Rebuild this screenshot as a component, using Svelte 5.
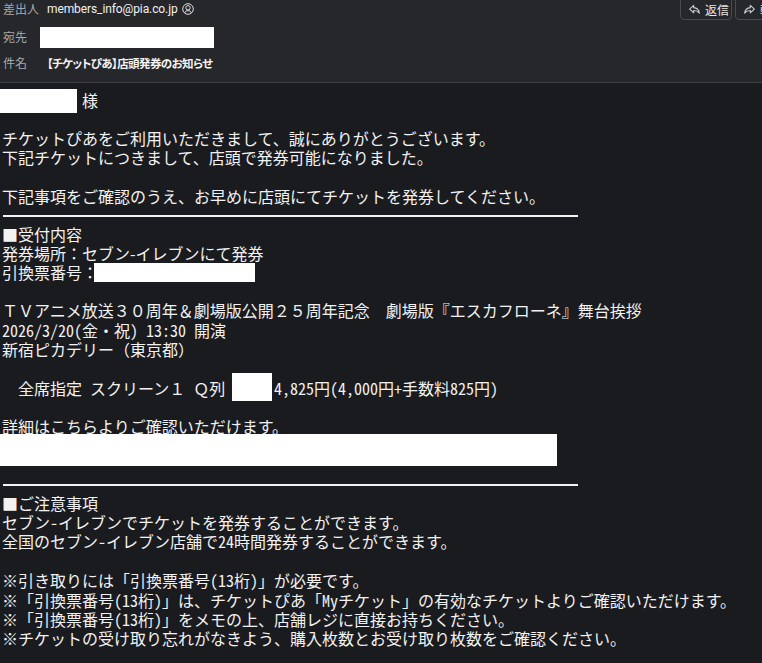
<script>
  const noticeLines = [
    "※引き取りには「引換票番号(13桁)」が必要です。",
    "※「引換票番号(13桁)」は、チケットぴあ「Myチケット」の有効なチケットよりご確認いただけます。",
    "※「引換票番号(13桁)」をメモの上、店舗レジに直接お持ちください。",
    "※チケットの受け取り忘れがなきよう、購入枚数とお受け取り枚数をご確認ください。",
  ];
</script>

<div class="mail">
  <header class="head">
    <div class="actions">
      <button class="action">
        <svg viewBox="0 0 16 16" width="13" height="13"><path d="M7 3 2 7.5 7 12V9.2c3 0 5 .8 7 3.3-.5-4-3-6.5-7-6.8z" fill="none" stroke="#c8c8c8" stroke-width="1.4" stroke-linejoin="round"/></svg>
        <span>返信</span>
      </button>
      <button class="action">
        <svg viewBox="0 0 16 16" width="13" height="13"><path d="M9 3l5 4.5L9 12V9.2c-3 0-5 .8-7 3.3.5-4 3-6.5 7-6.8z" fill="none" stroke="#c8c8c8" stroke-width="1.4" stroke-linejoin="round"/></svg>
        <span>転送</span>
      </button>
    </div>
    <div class="row from">
      <span class="label">差出人</span>
      <span class="value">members_info@pia.co.jp</span>
      <svg class="avatar" viewBox="0 0 12 12" width="12" height="12"><circle cx="6" cy="6" r="5.3" fill="none" stroke="#ddd" stroke-width="1"/><circle cx="6" cy="4.8" r="2.2" fill="none" stroke="#ddd" stroke-width="1"/><path d="M2.6 10c.6-1.8 2-2.4 3.4-2.4s2.8.6 3.4 2.4" fill="none" stroke="#ddd" stroke-width="1"/></svg>
    </div>
    <div class="row to">
      <span class="label">宛先</span>
      <span class="mask mask-to"></span>
    </div>
    <div class="row subject">
      <span class="label">件名</span>
      <strong>【チケットぴあ】店頭発券のお知らせ</strong>
    </div>
  </header>

  <main class="body">
    <div class="greeting"><span class="mask mask-name"></span><span>様</span></div>
    <p class="first">チケットぴあをご利用いただきまして、誠にありがとうございます。</p>
    <p>下記チケットにつきまして、店頭で発券可能になりました。</p>
    <p class="blank"></p>
    <p>下記事項をご確認のうえ、お早めに店頭にてチケットを発券してください。</p>
    <hr />
    <p>■受付内容</p>
    <p class="wide">発券場所&#xFF1A;セブン-イレブンにて発券</p>
    <p class="wide">引換票番号&#xFF1A;<span class="mask mask-code"></span></p>
    <p class="blank short"></p>
    <p class="wide">&#xFF34;&#xFF36;アニメ放送&#xFF13;&#xFF10;周年&#xFF06;劇場版公開&#xFF12;&#xFF15;周年記念&#x3000;劇場版『エスカフローネ』舞台挨拶</p>
    <p>2026/3/20(金・祝) 13:30 開演</p>
    <p class="wide">新宿ピカデリー&#xFF08;東京都&#xFF09;</p>
    <p class="blank"></p>
    <p class="seat"><span class="seat-text wide">全席指定 スクリーン&#xFF11; &#xFF31;列</span><span class="mask mask-seat"></span><span>4,825円(4,000円+手数料825円)</span></p>
    <p class="detail">詳細はこちらよりご確認いただけます。</p>
    <div class="mask mask-link"></div>
    <hr class="second" />
    <p>■ご注意事項</p>
    <p>セブン-イレブンでチケットを発券することができます。</p>
    <p>全国のセブン-イレブン店舗で24時間発券することができます。</p>
    <p class="blank"></p>
    {#each noticeLines as line}
      <p>{line}</p>
    {/each}
  </main>
</div>

<style>
  :global(body) {
    background: #1a1b1f;
  }

  .mail {
    width: 762px;
    height: 663px;
    overflow: hidden;
    background: #1a1b1f;
    color: #f2f2f2;
    font-family: "Noto Sans CJK JP", sans-serif;
  }

  .head {
    position: relative;
    box-sizing: border-box;
    height: 83px;
    background: #26272b;
    border-bottom: 1px solid #3c3d41;
    font-size: 12px;
    overflow: hidden;
  }

  .actions {
    position: absolute;
    top: -9px;
    left: 680px;
    display: flex;
    gap: 3px;
  }

  .action {
    display: flex;
    align-items: center;
    gap: 4px;
    height: 29px;
    width: 52px;
    padding: 7px 0 0 7px;
    background: transparent;
    border: 1px solid #4a4b4f;
    border-radius: 4px;
    color: #e8e8e8;
    font: 12px "Noto Sans CJK JP", sans-serif;
    white-space: nowrap;
    overflow: hidden;
  }

  .row {
    display: flex;
    align-items: center;
    color: #f0f0f0;
  }

  .from {
    height: 18px;
  }

  .value {
    font-family: Roboto, sans-serif;
    font-size: 12px;
    letter-spacing: -0.1px;
  }

  .to {
    height: 21px;
    margin-top: 9px;
  }

  .subject {
    height: 20px;
    margin-top: 5px;
  }

  .label {
    width: 47px;
    padding: 0 0 2px 3px;
    box-sizing: border-box;
    color: #a9a9ab;
    flex: none;
  }

  .to .label {
    width: 40px;
  }

  .avatar {
    margin-left: 4px;
  }

  .subject strong {
    font-weight: 700;
    font-size: 11.5px;
    letter-spacing: -0.6px;
    font-feature-settings: "palt";
    color: #f4f4f4;
  }

  .mask {
    display: inline-block;
    background: #fff;
    vertical-align: top;
  }

  .mask-to {
    width: 174px;
    height: 21px;
  }

  .mask-name {
    width: 77px;
    height: 24px;
  }

  .mask-code {
    width: 161px;
    height: 19px;
    margin-left: -4px;
  }

  .mask-seat {
    width: 40px;
    height: 28px;
    margin: -6px 2px 0 0;
  }

  .mask-link {
    display: block;
    position: relative;
    width: 557px;
    height: 32px;
    margin-top: -4px;
  }

  .body {
    font-size: 16px;
    line-height: 19.4px;
    font-feature-settings: "hwid";
  }

  .greeting {
    display: flex;
    align-items: center;
    gap: 5px;
    height: 24px;
    margin-top: 6px;
  }

  p {
    margin: 0;
    padding-left: 2px;
    white-space: pre;
    height: 19.4px;
  }

  .wide {
    font-feature-settings: normal;
  }

  .first {
    margin-top: 16px;
  }

  .blank {
    height: 19.4px;
  }

  .short {
    height: 18.4px;
  }

  hr {
    width: 575px;
    height: 2px;
    margin: 8px 0 8px 3px;
    border: 0;
    background: #f2f2f2;
  }

  .second {
    margin: 18px 0 8px 3px;
  }

  .seat {
    display: flex;
    height: 22px;
  }

  .seat-text {
    width: 230px;
    padding-left: 16px;
    box-sizing: border-box;
    word-spacing: 4.4px;
  }

  .detail {
    margin-top: 16px;
    height: 21px;
  }
</style>
